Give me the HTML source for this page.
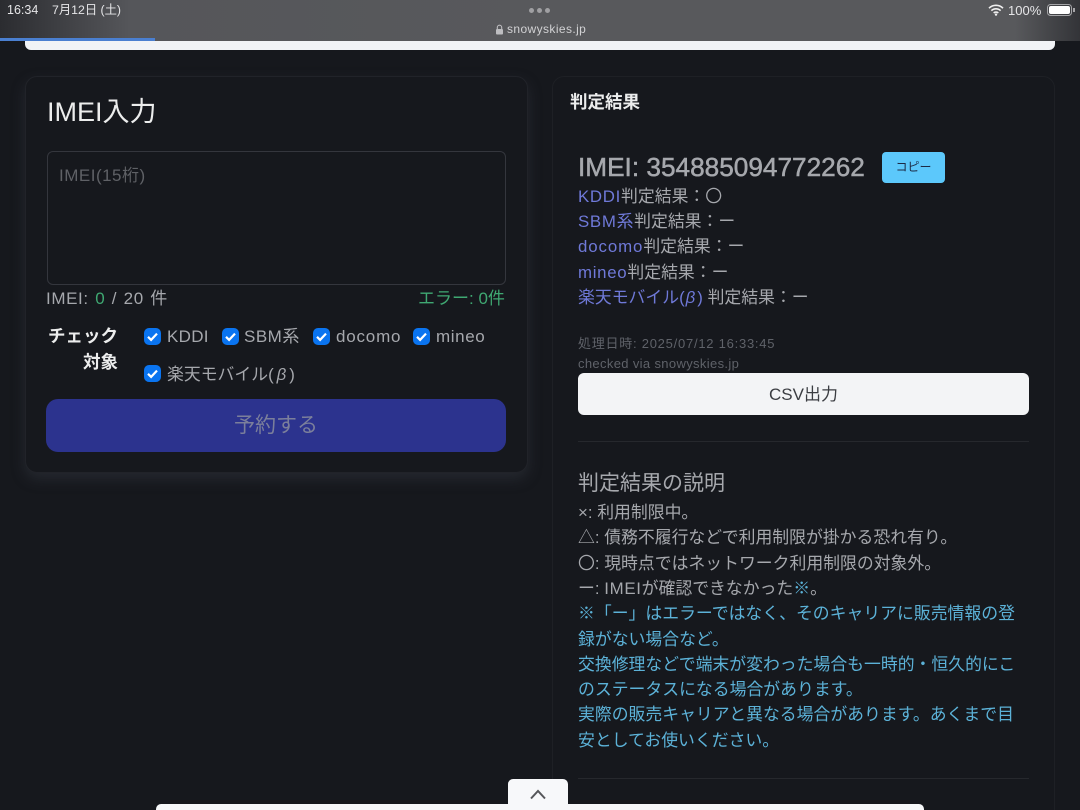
<!DOCTYPE html>
<html lang="ja"><head><meta charset="utf-8"><title>snowyskies.jp</title>
<style>
*{box-sizing:border-box}
html,body{margin:0;padding:0;width:1080px;height:810px;overflow:hidden;background:#16181d}
body{position:relative;font-family:"Liberation Sans","Noto Sans CJK JP",sans-serif;color:#a6a8ad}
.t{position:absolute;white-space:nowrap;line-height:1}
.b{color:#6f79d8}.c{color:#5cb2d8}.g{color:#3fa872}
.l{letter-spacing:.7px}
.r{font-size:16.85px}
.card{position:absolute;background:#16181d;border:1px solid #1e2025;border-radius:12px}
.cb{position:absolute;width:17px;height:17px;border-radius:5px;background:#0a74f0}
.cb svg{position:absolute;left:0;top:0}
</style></head><body>
<div style="position:absolute;left:0;top:0;width:1080px;height:41px;background:linear-gradient(90deg,#2b2c30 0,#55565a 12%,#58595c 50%,#58595c 94%,#333438 100%)"></div>
<div style="position:absolute;left:0;top:38px;width:155px;height:3px;background:#4a7fd0"></div>
<div style="position:absolute;left:25px;top:41px;width:1030px;height:9px;background:#f1f3f6;border-radius:0 0 6px 6px"></div>
<div class="t" style="left:7px;top:4px;font-size:12.5px;color:#e6e6e8">16:34</div>
<div class="t" style="left:52px;top:4px;font-size:12.3px;color:#e6e6e8">7月12日 (土)</div>
<div style="position:absolute;left:529px;top:8px;width:5px;height:5px;border-radius:50%;background:#a0a0a3"></div>
<div style="position:absolute;left:537px;top:8px;width:5px;height:5px;border-radius:50%;background:#a0a0a3"></div>
<div style="position:absolute;left:545px;top:8px;width:5px;height:5px;border-radius:50%;background:#a0a0a3"></div>
<svg style="position:absolute;left:495px;top:24px" width="9" height="11" viewBox="0 0 9 11"><path d="M2.3 5V3.4a2.2 2.2 0 0 1 4.4 0V5" fill="none" stroke="#bdbdc0" stroke-width="1.1"/><rect x="1" y="5" width="7" height="5.5" rx="1" fill="#bdbdc0"/></svg>
<div class="t" style="left:507px;top:23px;font-size:12px;letter-spacing:.4px;color:#d2d2d4">snowyskies.jp</div>
<svg style="position:absolute;left:988px;top:4px" width="16" height="12" viewBox="0 0 16 12"><path d="M1 4.2a10 10 0 0 1 14 0M3.4 6.7a6.6 6.6 0 0 1 9.2 0M5.7 9a3.3 3.3 0 0 1 4.6 0" fill="none" stroke="#f0f0f0" stroke-width="1.6"/><circle cx="8" cy="10.6" r="1.2" fill="#f0f0f0"/></svg>
<div class="t" style="left:1008px;top:4px;font-size:13px;color:#e6e6e8">100%</div>
<div style="position:absolute;left:1047px;top:4px;width:25px;height:12px;border:1px solid #a5a5a8;border-radius:3.5px;padding:1px"><div style="width:100%;height:100%;background:#fff;border-radius:2px"></div></div>
<div style="position:absolute;left:1073px;top:8px;width:1.5px;height:4px;background:#a5a5a8"></div>

<div class="card" style="left:25px;top:76px;width:503px;height:397px;border-color:#212329;box-shadow:0 6px 14px rgba(60,66,74,.4)"></div>
<div class="t" style="left:47px;top:99px;font-size:27px;color:#eceded">IMEI入力</div>
<div style="position:absolute;left:46.5px;top:150.5px;width:459.5px;height:134.5px;border:1px solid #34363d;border-radius:6px;background:#16181d"></div>
<div class="t" style="left:59px;top:167px;font-size:17px;letter-spacing:.5px;color:#5f6166">IMEI(15桁)</div>
<div class="t" style="left:46px;top:290px;font-size:17px;letter-spacing:.6px;word-spacing:1.2px;color:#a6a8ad">IMEI: <span class="g">0</span> / 20 件</div>
<div class="t g" style="left:418px;top:290px;font-size:17px">エラー: 0件</div>
<div class="t" style="left:48px;top:328px;font-size:17.5px;font-weight:bold;color:#eceded">チェック</div>
<div class="t" style="left:83px;top:354px;font-size:17.5px;font-weight:bold;color:#eceded">対象</div>
<div class="cb" style="left:144px;top:327.5px"><svg width="17" height="17" viewBox="0 0 17 17"><path d="M4 8.8l3.1 3.1L13 5.6" fill="none" stroke="#fff" stroke-width="2.2"/></svg></div>
<div class="t" style="left:167px;top:328px;font-size:17px;letter-spacing:.3px">KDDI</div>
<div class="cb" style="left:222px;top:327.5px"><svg width="17" height="17" viewBox="0 0 17 17"><path d="M4 8.8l3.1 3.1L13 5.6" fill="none" stroke="#fff" stroke-width="2.2"/></svg></div>
<div class="t" style="left:244px;top:328px;font-size:17px;letter-spacing:.5px">SBM系</div>
<div class="cb" style="left:313px;top:327.5px"><svg width="17" height="17" viewBox="0 0 17 17"><path d="M4 8.8l3.1 3.1L13 5.6" fill="none" stroke="#fff" stroke-width="2.2"/></svg></div>
<div class="t" style="left:336px;top:328px;font-size:17px;letter-spacing:.8px">docomo</div>
<div class="cb" style="left:413px;top:327.5px"><svg width="17" height="17" viewBox="0 0 17 17"><path d="M4 8.8l3.1 3.1L13 5.6" fill="none" stroke="#fff" stroke-width="2.2"/></svg></div>
<div class="t" style="left:436px;top:328px;font-size:17px;letter-spacing:.6px">mineo</div>
<div class="cb" style="left:144px;top:365px"><svg width="17" height="17" viewBox="0 0 17 17"><path d="M4 8.8l3.1 3.1L13 5.6" fill="none" stroke="#fff" stroke-width="2.2"/></svg></div>
<div class="t" style="left:167px;top:367px;font-size:16.85px">楽天モバイル(<i style="padding:0 3px 0 3px">β</i>)</div>
<div style="position:absolute;left:46px;top:399px;width:460px;height:53px;background:#2c338e;border-radius:12px"></div>
<div class="t" style="left:46px;top:415px;width:460px;text-align:center;font-size:21px;color:#7b7f9b">予約する</div>

<div class="card" style="left:552px;top:76px;width:503px;height:760px"></div>
<div class="t" style="left:570px;top:94px;font-size:17.5px;font-weight:bold;color:#eceded">判定結果</div>
<div class="t" style="left:578px;top:154px;font-size:26.2px;color:#a6a8ad;-webkit-text-stroke:.5px #a6a8ad">IMEI: 354885094772262</div>
<div style="position:absolute;left:882px;top:152px;width:63px;height:31px;background:#5cc8fb;border-radius:4px;text-align:center;font-size:12px;line-height:30px;color:#1c2a45">コピー</div>
<div class="t r" style="left:578px;top:189px"><span class="b l">KDDI</span>判定結果：〇</div>
<div class="t r" style="left:578px;top:214px"><span class="b l">SBM系</span>判定結果：ー</div>
<div class="t r" style="left:578px;top:239px"><span class="b" style="letter-spacing:.9px">docomo</span>判定結果：ー</div>
<div class="t r" style="left:578px;top:265px"><span class="b l">mineo</span>判定結果：ー</div>
<div class="t r" style="left:578px;top:290px"><span class="b">楽天モバイル(<i style="padding:0 2px 0 1px">β</i>)</span> 判定結果：ー</div>
<div class="t" style="left:578px;top:337px;font-size:13px;letter-spacing:.75px;color:#5f6269">処理日時: 2025/07/12 16:33:45</div>
<div class="t" style="left:578px;top:357px;font-size:13px;letter-spacing:.35px;color:#5f6269">checked via snowyskies.jp</div>
<div style="position:absolute;left:578px;top:373px;width:451px;height:42px;background:#f3f4f6;border-radius:6px;text-align:center;font-size:17px;line-height:43px;color:#3b3d42">CSV出力</div>
<div style="position:absolute;left:578px;top:441px;width:451px;height:1px;background:#26282d"></div>
<div class="t" style="left:578px;top:473px;font-size:21px;color:#a6a8ad">判定結果の説明</div>
<div class="t r" style="left:578px;top:505px">×: 利用制限中。</div>
<div class="t r" style="left:578px;top:530px">△: 債務不履行などで利用制限が掛かる恐れ有り。</div>
<div class="t r" style="left:578px;top:556px">〇: 現時点ではネットワーク利用制限の対象外。</div>
<div class="t r" style="left:578px;top:581px">ー: <span class="l">IMEI</span>が確認できなかった<span class="c">※</span>。</div>
<div class="t c r" style="left:578px;top:606px">※「ー」はエラーではなく、そのキャリアに販売情報の登</div>
<div class="t c r" style="left:578px;top:632px">録がない場合など。</div>
<div class="t c r" style="left:578px;top:657px">交換修理などで端末が変わった場合も一時的・恒久的にこ</div>
<div class="t c r" style="left:578px;top:682px">のステータスになる場合があります。</div>
<div class="t c r" style="left:578px;top:707px">実際の販売キャリアと異なる場合があります。あくまで目</div>
<div class="t c r" style="left:578px;top:733px">安としてお使いください。</div>
<div style="position:absolute;left:578px;top:778px;width:451px;height:1px;background:#26282d"></div>

<div style="position:absolute;left:508px;top:779px;width:60px;height:31px;background:#f7f8fa;border-radius:5px 5px 0 0"></div>
<svg style="position:absolute;left:529px;top:788px" width="18" height="12" viewBox="0 0 18 12"><path d="M2 10.5L9 3l7 7.5" fill="none" stroke="#55565a" stroke-width="2"/></svg>
<div style="position:absolute;left:156px;top:804px;width:768px;height:6px;background:#f7f8fa;border-radius:5px 5px 0 0"></div>
</body></html>
